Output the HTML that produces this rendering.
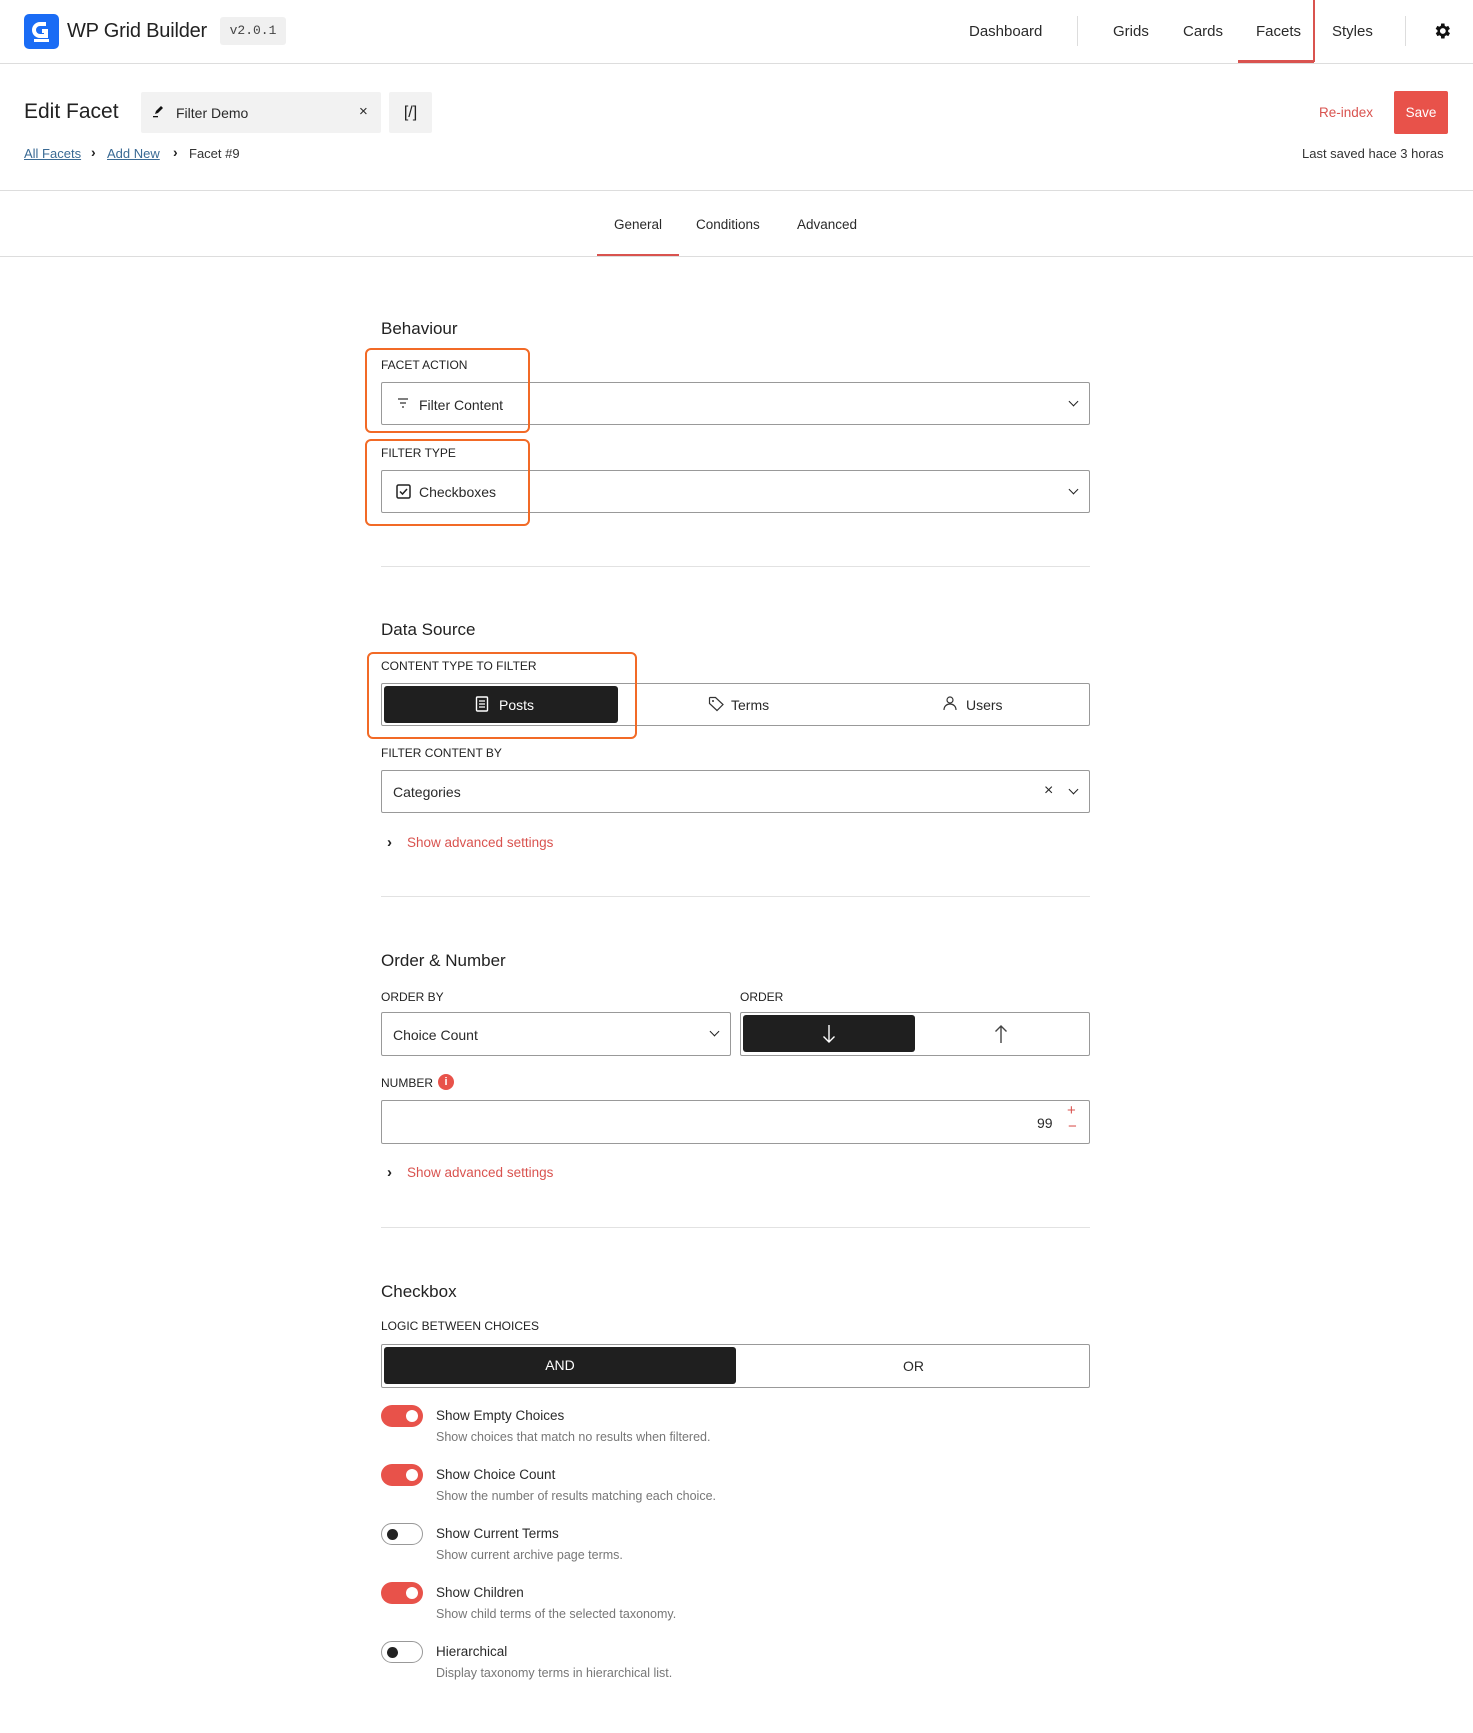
<!DOCTYPE html>
<html><head><meta charset="utf-8"><style>
*{box-sizing:border-box;margin:0;padding:0}
body{width:1473px;height:1733px;background:#fff;font-family:"Liberation Sans",sans-serif;color:#222;position:relative;overflow:hidden}
.a{position:absolute}
.t{font-size:14px;color:#2a2a2a;white-space:nowrap}
.lbl{position:absolute;left:381px;font-size:12px;color:#222;white-space:nowrap}
.inp{position:absolute;border:1px solid #999;border-radius:2px;background:#fff}
.h{position:absolute;left:381px;font-size:17px;color:#222}
.hr{position:absolute;left:381px;width:709px;height:1px;background:#e2e2e2}
.ob{position:absolute;border:2.5px solid #f26a26;border-radius:6px}
.chev{position:absolute;width:7px;height:7px;border-right:1.5px solid #222;border-bottom:1.5px solid #222;transform:rotate(45deg)}
.tg{position:absolute;left:381px;width:42px;height:22px;border-radius:11px}
.on{background:#e8524a}
.on::after{content:"";position:absolute;right:5px;top:5px;width:12px;height:12px;border-radius:50%;background:#fff}
.off{border:1px solid #999;background:#fff}
.off::after{content:"";position:absolute;left:5px;top:5px;width:11px;height:11px;border-radius:50%;background:#222}
.tt{position:absolute;left:436px;font-size:13.5px;color:#2a2a2a}
.td{position:absolute;left:436px;font-size:12.5px;color:#777}
.red{color:#d9534f}
</style></head><body>
<div class="a" style="left:0;top:63px;width:1473px;height:1px;background:#ddd"></div>
<div class="a" style="left:24px;top:14px;width:35px;height:35px;background:#1a6cf5;border-radius:5px">
<svg width="35" height="35" viewBox="0 0 35 35"><path d="M22 10h-6a6 6 0 0 0 0 12h6v-5h-4" fill="none" stroke="#fff" stroke-width="4"/><rect x="10" y="25" width="15" height="3" fill="#fff"/></svg></div>
<div class="a" style="left:67px;top:20px;font-size:20px;letter-spacing:-0.2px;color:#222;white-space:nowrap">WP Grid Builder</div>
<div class="a" style="left:220px;top:17px;width:66px;height:28px;background:#f0f0f0;border-radius:3px;font-family:'Liberation Mono',monospace;font-size:13px;color:#444;text-align:center;line-height:28px">v2.0.1</div>
<div class="a t" style="left:969px;top:23px;font-size:15px">Dashboard</div>
<div class="a" style="left:1077px;top:16px;width:1px;height:30px;background:#ddd"></div>
<div class="a t" style="left:1113px;top:23px;font-size:15px">Grids</div>
<div class="a t" style="left:1183px;top:23px;font-size:15px">Cards</div>
<div class="a t" style="left:1256px;top:23px;font-size:15px">Facets</div>
<div class="a" style="left:1238px;top:60px;width:76px;height:3px;background:#d9534f"></div>
<div class="a" style="left:1313px;top:0;width:1.5px;height:62px;background:#d9534f"></div>
<div class="a t" style="left:1332px;top:23px;font-size:15px">Styles</div>
<div class="a" style="left:1405px;top:16px;width:1px;height:30px;background:#ddd"></div>
<svg class="a" style="left:1432px;top:21px" width="20" height="20" viewBox="0 0 24 24"><path fill="#111" d="M19.4 13a7.5 7.5 0 0 0 0-2l2.1-1.6-2-3.5-2.5 1a7 7 0 0 0-1.7-1L15 3h-4l-.4 2.9a7 7 0 0 0-1.7 1l-2.5-1-2 3.5L6.6 11a7.5 7.5 0 0 0 0 2l-2.1 1.6 2 3.5 2.5-1a7 7 0 0 0 1.7 1L11 21h4l.4-2.9a7 7 0 0 0 1.7-1l2.5 1 2-3.5zM13 15.5a3.5 3.5 0 1 1 0-7 3.5 3.5 0 0 1 0 7z"/></svg>
<div class="a" style="left:24px;top:100px;font-size:21px;color:#222;white-space:nowrap">Edit Facet</div>
<div class="a" style="left:141px;top:92px;width:240px;height:41px;background:#f2f2f2;border-radius:2px"></div>
<svg class="a" style="left:152px;top:104px" width="14" height="14" viewBox="0 0 14 14"><path d="M3 10l1-3 5-5 2 2-5 5z" fill="#111"/><rect x="1" y="12" width="5" height="1.3" fill="#111"/></svg>
<div class="a t" style="left:176px;top:105px">Filter Demo</div>
<div class="a t" style="left:359px;top:103px;font-size:15px">×</div>
<div class="a" style="left:389px;top:92px;width:43px;height:41px;background:#f2f2f2;border-radius:2px;text-align:center;line-height:41px;font-size:16px">[/]</div>
<div class="a" style="left:24px;top:146px;font-size:13px;color:#3a6a94;text-decoration:underline">All Facets</div>
<div class="a" style="left:91px;top:144px;font-size:14px;font-weight:bold">›</div>
<div class="a" style="left:107px;top:146px;font-size:13px;color:#3a6a94;text-decoration:underline">Add New</div>
<div class="a" style="left:173px;top:144px;font-size:14px;font-weight:bold">›</div>
<div class="a" style="left:189px;top:146px;font-size:13px;color:#333">Facet #9</div>
<div class="a red" style="left:1319px;top:105px;font-size:13.5px">Re-index</div>
<div class="a" style="left:1394px;top:91px;width:54px;height:43px;background:#e8524a;border-radius:2px;color:#fff;font-size:13.5px;text-align:center;line-height:43px">Save</div>
<div class="a" style="left:1302px;top:146px;font-size:13px;color:#333">Last saved hace 3 horas</div>
<div class="a" style="left:0;top:190px;width:1473px;height:1px;background:#ddd"></div>
<div class="a t" style="left:614px;top:217px;font-size:13.5px">General</div>
<div class="a t" style="left:696px;top:217px;font-size:13.5px">Conditions</div>
<div class="a t" style="left:797px;top:217px;font-size:13.5px">Advanced</div>
<div class="a" style="left:0;top:256px;width:1473px;height:1px;background:#ddd"></div>
<div class="a" style="left:597px;top:254px;width:82px;height:2px;background:#d9534f"></div>
<div class="h" style="top:319px">Behaviour</div>
<div class="lbl" style="top:358px">FACET ACTION</div>
<div class="inp" style="left:381px;top:382px;width:709px;height:43px"></div>
<svg class="a" style="left:397px;top:397px" width="12" height="12" viewBox="0 0 12 12"><path d="M1 2h10M3 6h6M5 10h2" stroke="#333" stroke-width="1.3"/></svg>
<div class="a t" style="left:419px;top:397px">Filter Content</div>
<div class="chev" style="left:1070px;top:398px"></div>
<div class="lbl" style="top:446px">FILTER TYPE</div>
<div class="inp" style="left:381px;top:470px;width:709px;height:43px"></div>
<svg class="a" style="left:396px;top:484px" width="15" height="15" viewBox="0 0 15 15"><rect x="1" y="1" width="13" height="13" rx="1.5" fill="none" stroke="#222" stroke-width="1.5"/><path d="M4 7.5l2.5 2.5 4.5-5" fill="none" stroke="#222" stroke-width="1.5"/></svg>
<div class="a t" style="left:419px;top:484px">Checkboxes</div>
<div class="chev" style="left:1070px;top:486px"></div>
<div class="ob" style="left:365px;top:348px;width:165px;height:85px"></div>
<div class="ob" style="left:365px;top:439px;width:165px;height:87px"></div>
<div class="hr" style="top:566px"></div>
<div class="h" style="top:620px">Data Source</div>
<div class="lbl" style="top:659px">CONTENT TYPE TO FILTER</div>
<div class="inp" style="left:381px;top:683px;width:709px;height:43px"></div>
<div class="a" style="left:384px;top:686px;width:234px;height:37px;background:#1f1f1f;border-radius:3px"></div>
<svg class="a" style="left:475px;top:696px" width="14" height="16" viewBox="0 0 14 16"><rect x="1.5" y="1" width="11" height="14" rx="1" fill="none" stroke="#fff" stroke-width="1.4"/><path d="M4 5h6M4 8h6M4 11h6" stroke="#fff" stroke-width="1.2"/></svg>
<div class="a" style="left:499px;top:697px;font-size:14px;color:#fff">Posts</div>
<svg class="a" style="left:708px;top:696px" width="16" height="16" viewBox="0 0 16 16"><path d="M1.5 2v5.5l7.5 7 6-6-7.5-7H2z" fill="none" stroke="#333" stroke-width="1.2"/><circle cx="5" cy="5" r="1" fill="#333"/></svg>
<div class="a t" style="left:731px;top:697px">Terms</div>
<svg class="a" style="left:942px;top:695px" width="16" height="16" viewBox="0 0 16 16"><circle cx="8" cy="5" r="3" fill="none" stroke="#333" stroke-width="1.2"/><path d="M2 15c0-4 3-6 6-6s6 2 6 6" fill="none" stroke="#333" stroke-width="1.2"/></svg>
<div class="a t" style="left:966px;top:697px">Users</div>
<div class="ob" style="left:367px;top:652px;width:270px;height:87px"></div>
<div class="lbl" style="top:746px">FILTER CONTENT BY</div>
<div class="inp" style="left:381px;top:770px;width:709px;height:43px"></div>
<div class="a t" style="left:393px;top:784px">Categories</div>
<div class="a t" style="left:1044px;top:782px;font-size:16px">×</div>
<div class="chev" style="left:1070px;top:786px"></div>
<div class="a" style="left:387px;top:834px;font-size:15px;font-weight:bold">›</div>
<div class="a red" style="left:407px;top:835px;font-size:13.5px">Show advanced settings</div>
<div class="hr" style="top:896px"></div>
<div class="h" style="top:951px">Order &amp; Number</div>
<div class="lbl" style="top:990px">ORDER BY</div>
<div class="lbl" style="left:740px;top:990px">ORDER</div>
<div class="inp" style="left:381px;top:1012px;width:350px;height:44px"></div>
<div class="a t" style="left:393px;top:1027px">Choice Count</div>
<div class="chev" style="left:711px;top:1028px"></div>
<div class="inp" style="left:740px;top:1012px;width:350px;height:44px"></div>
<div class="a" style="left:743px;top:1015px;width:172px;height:37px;background:#1f1f1f;border-radius:3px"></div>
<svg class="a" style="left:822px;top:1024px" width="14" height="20" viewBox="0 0 14 20"><path d="M7 1v17M1.5 12.5L7 18l5.5-5.5" fill="none" stroke="#fff" stroke-width="1.4"/></svg>
<svg class="a" style="left:994px;top:1024px" width="14" height="20" viewBox="0 0 14 20"><path d="M7 19V2M1.5 7.5L7 2l5.5 5.5" fill="none" stroke="#444" stroke-width="1.4"/></svg>
<div class="lbl" style="top:1076px">NUMBER</div>
<div class="a" style="left:438px;top:1074px;width:16px;height:16px;border-radius:50%;background:#e8524a;color:#fff;font-size:11px;font-weight:bold;text-align:center;line-height:16px">i</div>
<div class="inp" style="left:381px;top:1100px;width:709px;height:44px"></div>
<div class="a t" style="left:1037px;top:1115px">99</div>
<div class="a red" style="left:1067px;top:1102px;font-size:15px">+</div>
<div class="a red" style="left:1068px;top:1118px;font-size:15px">−</div>
<div class="a" style="left:387px;top:1164px;font-size:15px;font-weight:bold">›</div>
<div class="a red" style="left:407px;top:1165px;font-size:13.5px">Show advanced settings</div>
<div class="hr" style="top:1227px"></div>
<div class="h" style="top:1282px">Checkbox</div>
<div class="lbl" style="top:1319px">LOGIC BETWEEN CHOICES</div>
<div class="inp" style="left:381px;top:1344px;width:709px;height:44px"></div>
<div class="a" style="left:384px;top:1347px;width:352px;height:37px;background:#1f1f1f;border-radius:3px;color:#fff;font-size:14px;text-align:center;line-height:37px">AND</div>
<div class="a t" style="left:903px;top:1358px">OR</div>
<div class="tg on" style="top:1405px"></div><div class="tt" style="top:1408px">Show Empty Choices</div><div class="td" style="top:1430px">Show choices that match no results when filtered.</div>
<div class="tg on" style="top:1464px"></div><div class="tt" style="top:1467px">Show Choice Count</div><div class="td" style="top:1489px">Show the number of results matching each choice.</div>
<div class="tg off" style="top:1523px"></div><div class="tt" style="top:1526px">Show Current Terms</div><div class="td" style="top:1548px">Show current archive page terms.</div>
<div class="tg on" style="top:1582px"></div><div class="tt" style="top:1585px">Show Children</div><div class="td" style="top:1607px">Show child terms of the selected taxonomy.</div>
<div class="tg off" style="top:1641px"></div><div class="tt" style="top:1644px">Hierarchical</div><div class="td" style="top:1666px">Display taxonomy terms in hierarchical list.</div>
</body></html>
